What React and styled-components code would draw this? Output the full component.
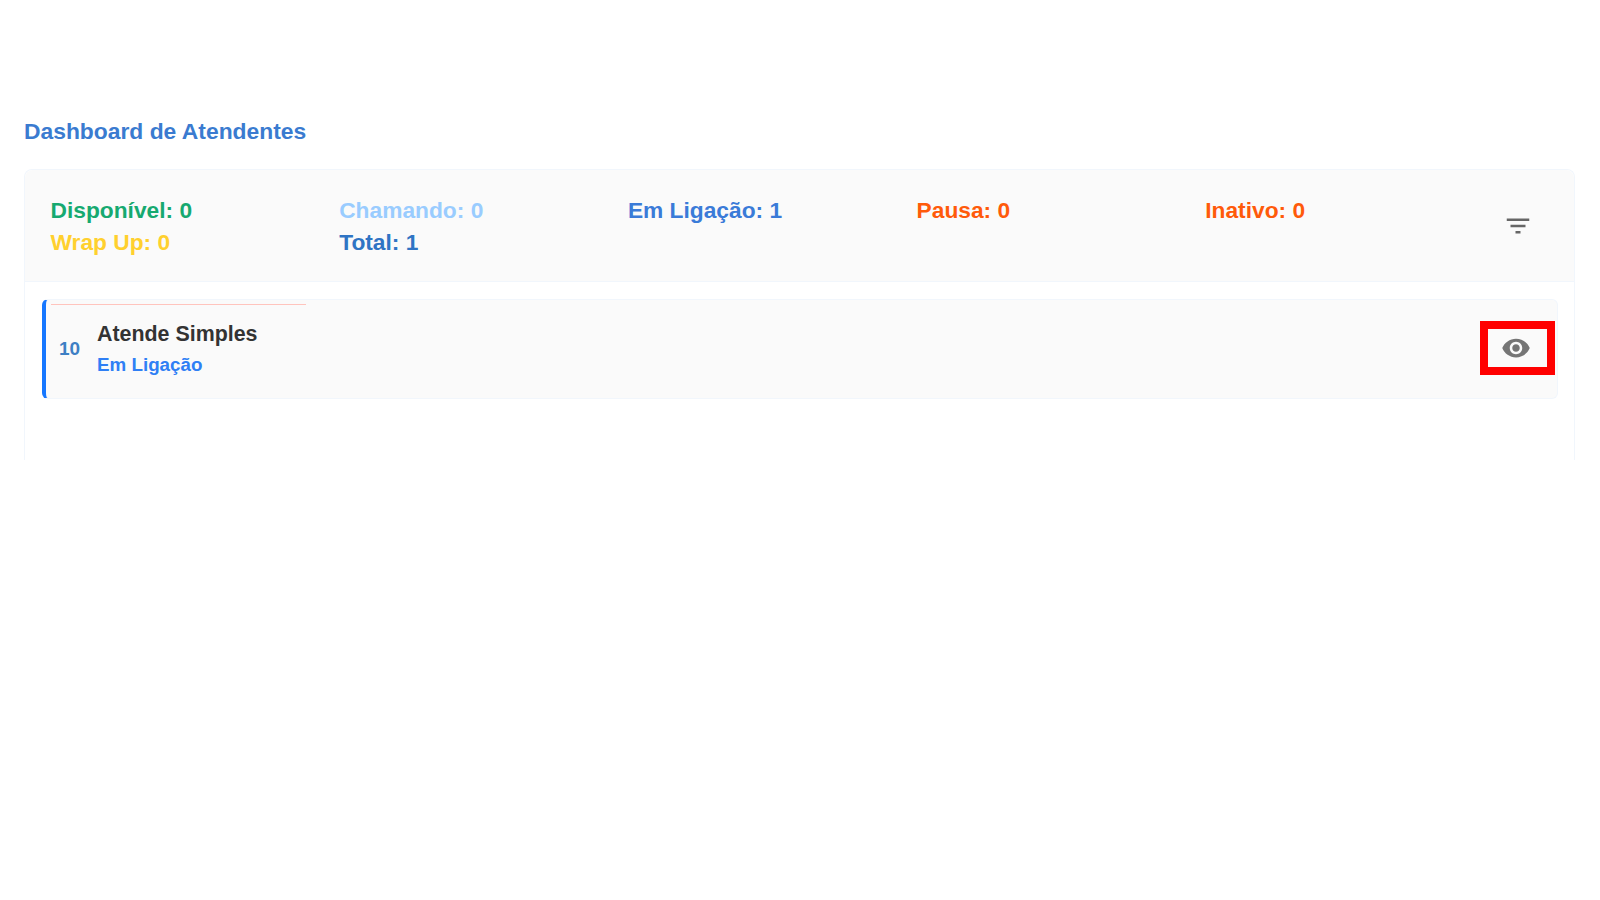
import styled, { createGlobalStyle } from 'styled-components';

const GlobalStyle = createGlobalStyle`
  html, body {
    margin: 0;
    padding: 0;
    background: #ffffff;
    font-family: "Liberation Sans", Arial, sans-serif;
  }
`;

const Page = styled.div`
  width: 1600px;
  height: 900px;
  box-sizing: border-box;
  padding: 117px 25px 0 24px;
  overflow: hidden;
`;

const PageTitle = styled.h1`
  margin: 0 0 24px;
  font-size: 22.85px;
  line-height: 28px;
  font-weight: 700;
  color: #3a7bd0;
`;

const Panel = styled.section`
  height: 291px;
  box-sizing: border-box;
  border: 1px solid #f1f6fc;
  border-bottom: none;
  border-radius: 8px 8px 0 0;
  background: #ffffff;
`;

const PanelHeader = styled.header`
  height: 112px;
  box-sizing: border-box;
  display: flex;
  align-items: center;
  padding: 24px 41px 24px 25.5px;
  background: #fafafa;
  border-bottom: 1px solid #f1f6fc;
  border-radius: 8px 8px 0 0;
`;

const StatsGrid = styled.div`
  flex: 1;
  align-self: flex-start;
  display: grid;
  grid-template-columns: repeat(5, 288.7px);
`;

const Stat = styled.span`
  font-size: 22.75px;
  line-height: 32px;
  font-weight: 700;
  color: ${({ color }) => color};
`;

const IconButton = styled.button`
  display: flex;
  align-items: center;
  justify-content: center;
  padding: 0;
  border: none;
  background: none;
  color: ${({ $tone }) => $tone || '#666666'};
`;

const AgentList = styled.div`
  padding: 17px 16px 0 17px;
`;

const AgentCard = styled.article`
  position: relative;
  height: 100px;
  box-sizing: border-box;
  display: flex;
  align-items: center;
  padding: 0 2px 0 13px;
  background: #fafafa;
  border: 1px solid #f1f6fc;
  border-left: 4px solid #1677ff;
  border-radius: 6px;
`;

const TopLine = styled.span`
  position: absolute;
  top: 4px;
  left: 5px;
  width: 255px;
  height: 1px;
  background: #ffc4bd;
`;

const Extension = styled.span`
  width: 38px;
  font-size: 19px;
  font-weight: 700;
  color: #3d7fc4;
`;

const AgentInfo = styled.div`
  flex: 1;
  display: flex;
  flex-direction: column;
  gap: 6px;
  margin-bottom: 1px;
`;

const AgentName = styled.span`
  font-size: 21.4px;
  line-height: 26px;
  font-weight: 700;
  color: #333333;
`;

const AgentStatus = styled.span`
  font-size: 18.8px;
  line-height: 24px;
  font-weight: 700;
  color: #2f7ff5;
`;

const HighlightBox = styled.div`
  width: 75px;
  height: 54px;
  margin-bottom: 2px;
  box-sizing: border-box;
  display: flex;
  align-items: center;
  justify-content: center;
  padding-right: 4px;
  border: 8px solid #ff0000;
`;

const FilterIcon = () => (
  <svg width="30" height="30" viewBox="0 0 24 24" fill="currentColor">
    <path d="M10 18h4v-2h-4v2zM3 6v2h18V6H3zm3 7h12v-2H6v2z" />
  </svg>
);

const EyeIcon = () => (
  <svg width="30" height="30" viewBox="0 0 24 24" fill="currentColor">
    <path d="M12 4.5C7 4.5 2.73 7.61 1 12c1.73 4.39 6 7.5 11 7.5s9.27-3.11 11-7.5c-1.73-4.39-6-7.5-11-7.5zM12 17c-2.76 0-5-2.24-5-5s2.24-5 5-5 5 2.24 5 5-2.24 5-5 5zm0-8c-1.66 0-3 1.34-3 3s1.34 3 3 3 3-1.34 3-3-1.34-3-3-3z" />
  </svg>
);

const stats = [
  { label: 'Disponível: 0', color: '#16a970' },
  { label: 'Chamando: 0', color: '#99ccff' },
  { label: 'Em Ligação: 1', color: '#3a7bd8' },
  { label: 'Pausa: 0', color: '#ff5a0a' },
  { label: 'Inativo: 0', color: '#ff5a0a' },
  { label: 'Wrap Up: 0', color: '#ffd02e' },
  { label: 'Total: 1', color: '#2f74c4' },
];

export default function App() {
  return (
    <>
      <GlobalStyle />
      <Page>
        <PageTitle>Dashboard de Atendentes</PageTitle>
        <Panel>
          <PanelHeader>
            <StatsGrid>
              {stats.map((stat) => (
                <Stat key={stat.label} color={stat.color}>
                  {stat.label}
                </Stat>
              ))}
            </StatsGrid>
            <IconButton aria-label="Filtrar">
              <FilterIcon />
            </IconButton>
          </PanelHeader>
          <AgentList>
            <AgentCard>
              <TopLine />
              <Extension>10</Extension>
              <AgentInfo>
                <AgentName>Atende Simples</AgentName>
                <AgentStatus>Em Ligação</AgentStatus>
              </AgentInfo>
              <HighlightBox>
                <IconButton aria-label="Ver" $tone="#757575">
                  <EyeIcon />
                </IconButton>
              </HighlightBox>
            </AgentCard>
          </AgentList>
        </Panel>
      </Page>
    </>
  );
}
